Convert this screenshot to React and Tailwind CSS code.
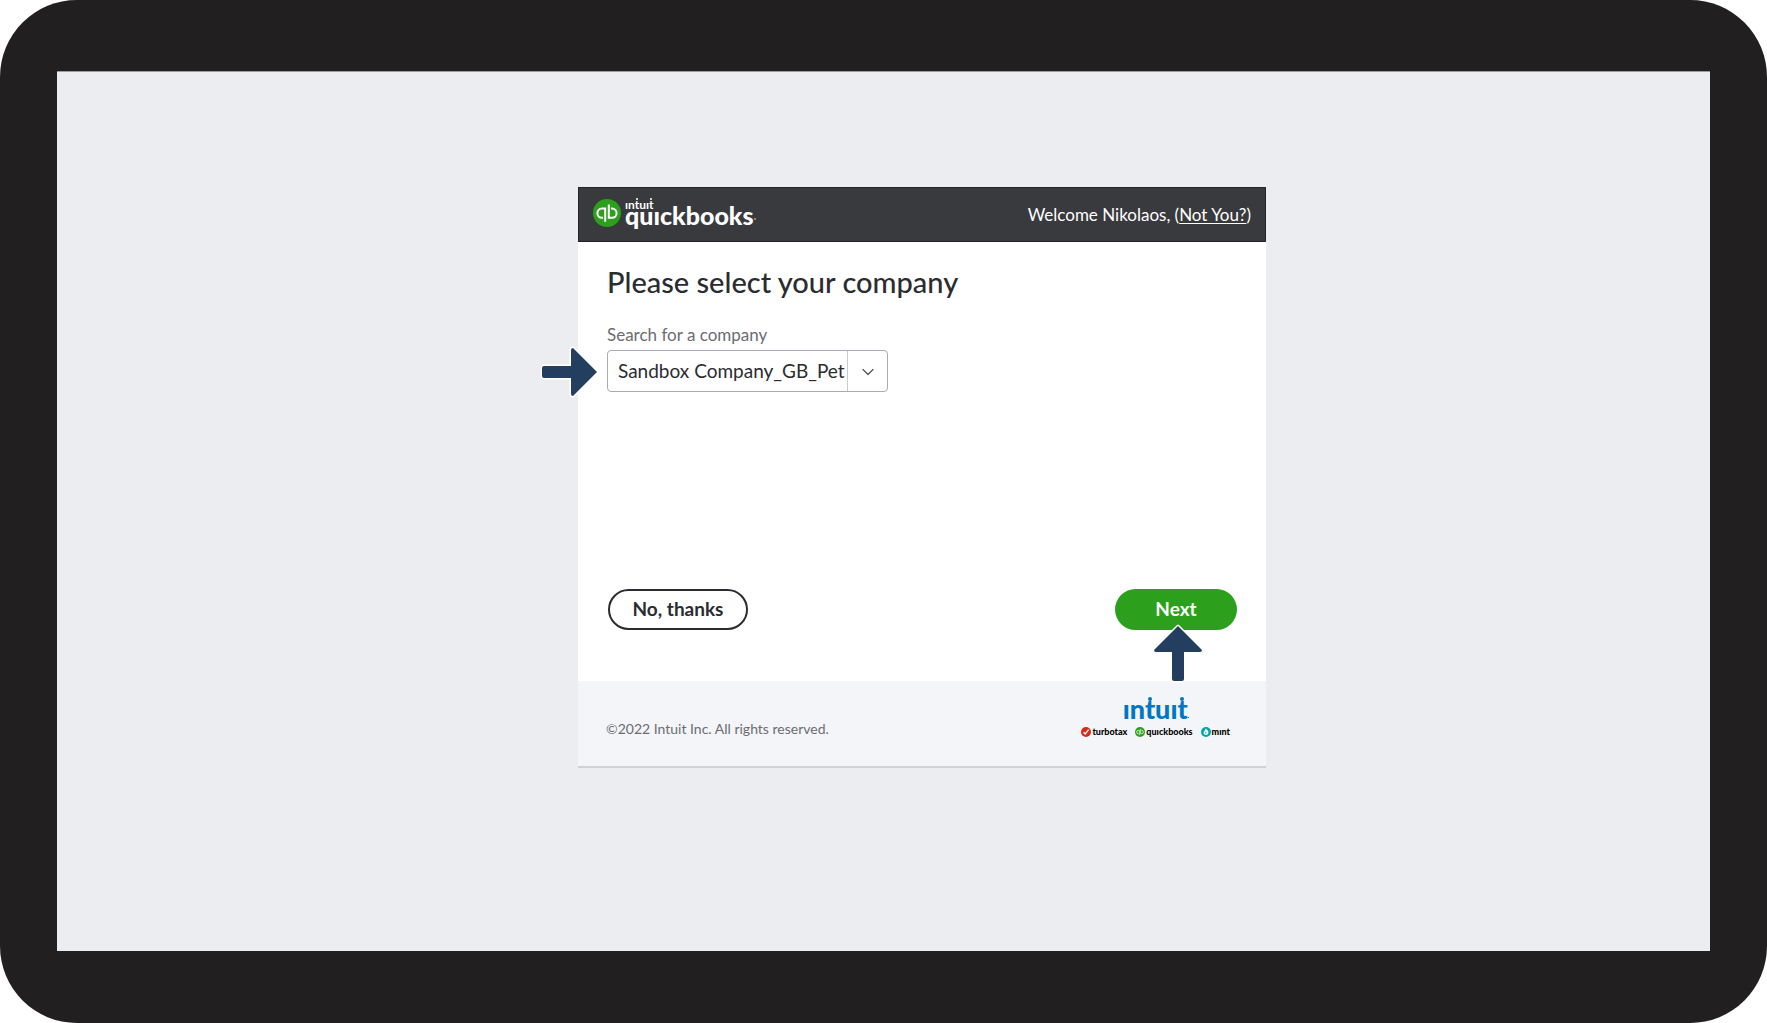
import React from "react";

function Arrow({ className }) {
  return (
    <svg viewBox="0 0 60 52" className={className} aria-hidden="true">
      <path
        d="M4 20h27V4q0-2 2-2L57 26 33 50q-2 0-2-2V32H4q-2 0-2-2v-8q0-2 2-2z"
        fill="#243e60"
        stroke="#fff"
        strokeWidth="3"
        strokeLinejoin="round"
        paintOrder="stroke"
      />
    </svg>
  );
}

function QbMark({ className, color }) {
  return (
    <svg viewBox="0 0 28 28" className={className} aria-hidden="true">
      <circle cx="14" cy="14" r="14" fill={color} />
      <g fill="none" stroke="#fff" strokeWidth="2">
        <path d="M10 18.8H9a4.6 4.6 0 0 1 0-9.2h3.2v13.2" />
        <path d="M18 9.6h1a4.6 4.6 0 0 1 0 9.2h-3.200V5.400" />
      </g>
    </svg>
  );
}

function SmallT() {
  return (
    <span className="relative">
      t<span className="absolute top-[1px] left-[1px] size-[2px] rounded-full bg-current" />
    </span>
  );
}

function LargeT() {
  return (
    <span className="relative">
      t<span className="absolute top-[5px] left-[3px] size-1 rounded-full bg-current" />
    </span>
  );
}

function HeaderLogo() {
  return (
    <div className="flex items-center text-white">
      <div className="pb-1">
        <QbMark className="size-7" color="#2ca01c" />
      </div>
      <div className="ml-1 pb-2.5">
        <p className="text-[12px] leading-[10px] font-bold">
          ın<SmallT />uı<SmallT />
        </p>
        <p className="flex items-end text-[25px] leading-[10px] font-black">
          quıckbooks<span className="size-0.5 rounded-full bg-[#a0a2a6]" />
        </p>
      </div>
    </div>
  );
}

function IntuitLogo() {
  return (
    <p className="flex items-end text-[27px] leading-[22px] font-black text-[#0077c5]">
      <span>
        ın<LargeT />uı<LargeT />
      </span>
      <span className="mb-0.5 size-px bg-current" />
    </p>
  );
}

function Brand({ icon, children }) {
  return (
    <li className="flex items-center gap-px">
      {icon}
      <span>{children}</span>
    </li>
  );
}

export default function App() {
  return (
    <div className="bg-white font-['Lato',sans-serif] text-[#2b2c30]">
      <div className="min-h-screen rounded-[77px] bg-[#221f20] px-[57px] pt-[71px] pb-[72px]">
        <main className="flex min-h-[880px] items-start justify-center border-t border-[#a09a9e] bg-[#ecedf1] pt-[115px] pl-[77px]">
          <section className="w-full max-w-[688px] border-b-2 border-[#cfd1da] bg-white">
            <header className="flex h-[55px] items-center justify-between border border-[#242528] bg-[#393a3d] px-3.5 text-white">
              <HeaderLogo />
              <p className="text-[17px]">
                Welcome Nikolaos, (<a href="#switch" className="underline underline-offset-2">Not You?</a>)
              </p>
            </header>

            <form className="px-[29px] pt-5 pb-[51px]" onSubmit={(e) => e.preventDefault()}>
              <h1 className="text-[29px] leading-10 font-medium">Please select your company</h1>
              <label htmlFor="company" className="mt-5 block text-[17px] leading-[26px] text-[#6b6c72]">
                Search for a company
              </label>
              <div className="relative mt-0.5 w-[281px]">
                <div className="flex h-[42px] overflow-hidden rounded-[4px] border border-[#a9abb3] bg-white">
                  <input
                    id="company"
                    type="text"
                    defaultValue="Sandbox Company_GB_Pet"
                    className="min-w-0 flex-1 pl-2.5 text-[19px] outline-none"
                  />
                  <button type="button" aria-label="Show companies" className="flex w-10 items-center justify-center border-l border-[#c9cbd2]">
                    <svg viewBox="0 0 12 8" className="mt-0.5 h-2 w-3" fill="none" stroke="#55565b" strokeWidth="1.3" strokeLinecap="round" strokeLinejoin="round" aria-hidden="true">
                      <path d="M1 1.5 6 6.5l5-5" />
                    </svg>
                  </button>
                </div>
                <Arrow className="absolute top-[-4px] left-[-67px] h-[52px] w-[60px]" />
              </div>

              <div className="mt-[197px] flex items-center justify-between pl-px">
                <button type="button" className="h-[41px] w-[140px] rounded-full border-2 border-[#2b2c2f] bg-white text-[19px] font-bold">
                  No, thanks
                </button>
                <div className="relative">
                  <button type="submit" className="h-[41px] w-[122px] rounded-full bg-[#2ca01c] text-[19px] font-bold text-white">
                    Next
                  </button>
                  <Arrow className="absolute top-[38px] left-[33px] h-[52px] w-[60px] -rotate-90" />
                </div>
              </div>
            </form>

            <footer className="flex h-[85px] items-center justify-between bg-[#f4f5f8] pr-9 pl-7">
              <p className="pt-2.5 text-[14px] text-[#6b6c72]">©2022 Intuit Inc. All rights reserved.</p>
              <div className="flex flex-col items-center pb-3">
                <IntuitLogo />
                <ul className="mt-1.5 flex gap-2 text-[9px] leading-3 font-black text-black">
                  <Brand
                    icon={
                      <svg viewBox="0 0 10 10" className="size-2.5" aria-hidden="true">
                        <circle cx="5" cy="5" r="5" fill="#d52b1e" />
                        <path d="m2.6 5.2 1.6 1.8 3.4-4.4" fill="none" stroke="#fff" strokeWidth="1.3" />
                      </svg>
                    }
                  >
                    turbotax
                  </Brand>
                  <Brand icon={<QbMark className="size-2.5" color="#2ca01c" />}>quıckbooks</Brand>
                  <Brand
                    icon={
                      <svg viewBox="0 0 10 10" className="size-2.5" aria-hidden="true">
                        <circle cx="5" cy="5" r="5" fill="#00a6a4" />
                        <path d="M4.6 1.4C7 3 7.6 4.4 7.4 6A2.5 2.5 0 0 1 2.5 6C2.5 4.500 4.300 3.600 4.600 1.400z" fill="#fff" />
                        <path d="M4.800 4.200Q6.200 6 4.800 7.600Q3.800 6 4.800 4.200z" fill="#00a6a4" />
                      </svg>
                    }
                  >
                    mınt
                  </Brand>
                </ul>
              </div>
            </footer>
          </section>
        </main>
      </div>
    </div>
  );
}
